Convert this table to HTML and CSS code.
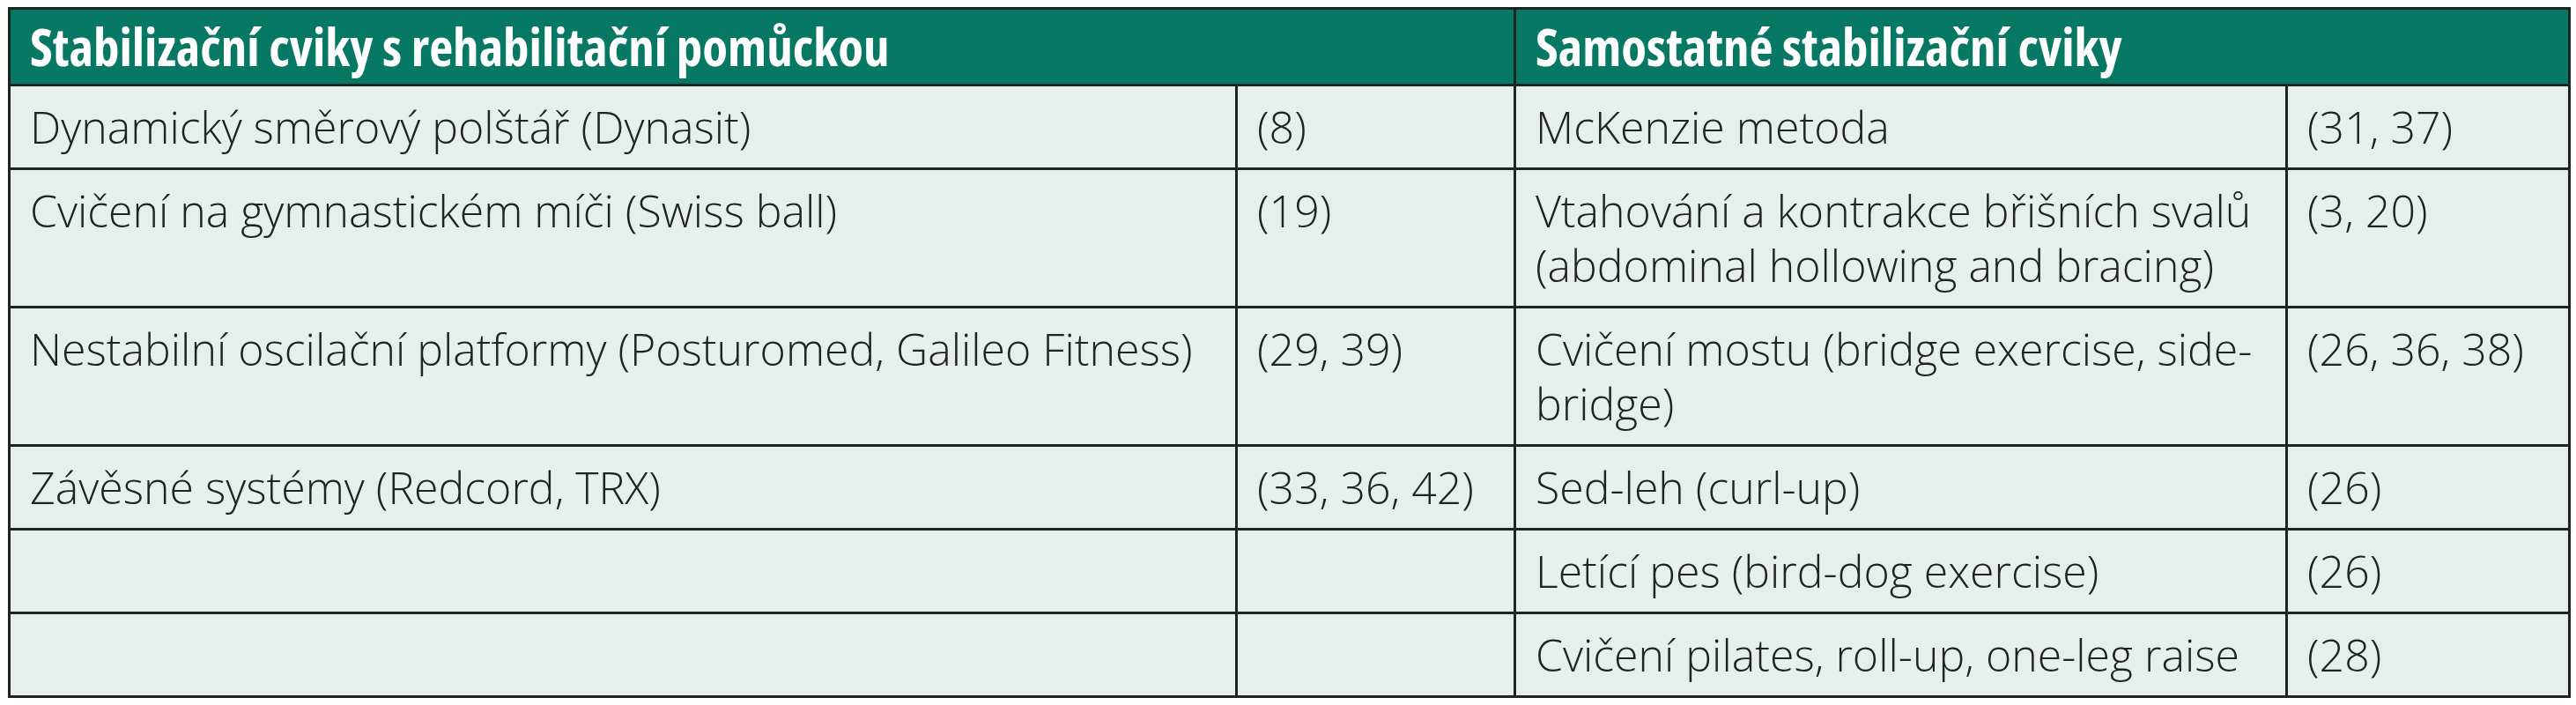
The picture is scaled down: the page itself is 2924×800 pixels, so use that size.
FILE: index.html
```html
<!DOCTYPE html>
<html lang="cs">
<head>
<meta charset="utf-8">
<title>Stabilizační cviky</title>
<link rel="stylesheet" href="styles.css">
</head>
<body>
<table class="tbl">
  <colgroup>
    <col class="c-name-l">
    <col class="c-ref-l">
    <col class="c-name-r">
    <col class="c-ref-r">
  </colgroup>
  <thead>
    <tr class="head">
      <th colspan="2" class="h-left">Stabilizační cviky s rehabilitační pomůckou</th>
      <th colspan="2" class="h-right">Samostatné stabilizační cviky</th>
    </tr>
  </thead>
  <tbody>
    <tr>
      <td>Dynamický směrový polštář (Dynasit)</td>
      <td>(8)</td>
      <td>McKenzie metoda</td>
      <td>(31, 37)</td>
    </tr>
    <tr>
      <td>Cvičení na gymnastickém míči (Swiss ball)</td>
      <td>(19)</td>
      <td>Vtahování a kontrakce břišních svalů (abdominal hollowing and bracing)</td>
      <td>(3, 20)</td>
    </tr>
    <tr>
      <td>Nestabilní oscilační platformy (Posturomed, Galileo Fitness)</td>
      <td>(29, 39)</td>
      <td>Cvičení mostu (bridge exercise, side-bridge)</td>
      <td>(26, 36, 38)</td>
    </tr>
    <tr>
      <td>Závěsné systémy (Redcord, TRX)</td>
      <td>(33, 36, 42)</td>
      <td>Sed-leh (curl-up)</td>
      <td>(26)</td>
    </tr>
    <tr>
      <td></td>
      <td></td>
      <td>Letící pes (bird-dog exercise)</td>
      <td>(26)</td>
    </tr>
    <tr>
      <td></td>
      <td></td>
      <td>Cvičení pilates, roll-up, one-leg raise</td>
      <td>(28)</td>
    </tr>
  </tbody>
</table>
</body>
</html>
```

FILE: styles.css
```css
html, body {
  margin: 0;
  padding: 0;
  background: #ffffff;
}
body {
  padding: 8px 9px;
}
.tbl {
  border-collapse: collapse;
  table-layout: fixed;
  width: 2906px;
  background: #e6efec;
  border: 3px solid #1c2522;
  font-family: "Open Sans", "Liberation Sans", sans-serif;
  color: #222222;
}
.c-name-l { width: 1393px; }
.c-ref-l { width: 316px; }
.c-name-r { width: 876px; }
.c-ref-r { width: 321px; }

.head th {
  background: #077863;
  color: #ffffff;
  text-align: left;
  font-weight: 700;
  font-stretch: 87.5%;
  font-size: 59px;
  line-height: 62px;
  height: 62px;
  padding: 10px 22px 12px;
  border-bottom: 3px solid #1c2522;
}
.head .h-right {
  border-left: 3px solid #1c2522;
}
td {
  vertical-align: top;
  font-weight: 300;
  font-size: 50px;
  line-height: 62px;
  height: 62px;
  padding: 15px 22px 15px;
  border-top: 3px solid #1c2522;
  border-left: 3px solid #1c2522;
}
```
